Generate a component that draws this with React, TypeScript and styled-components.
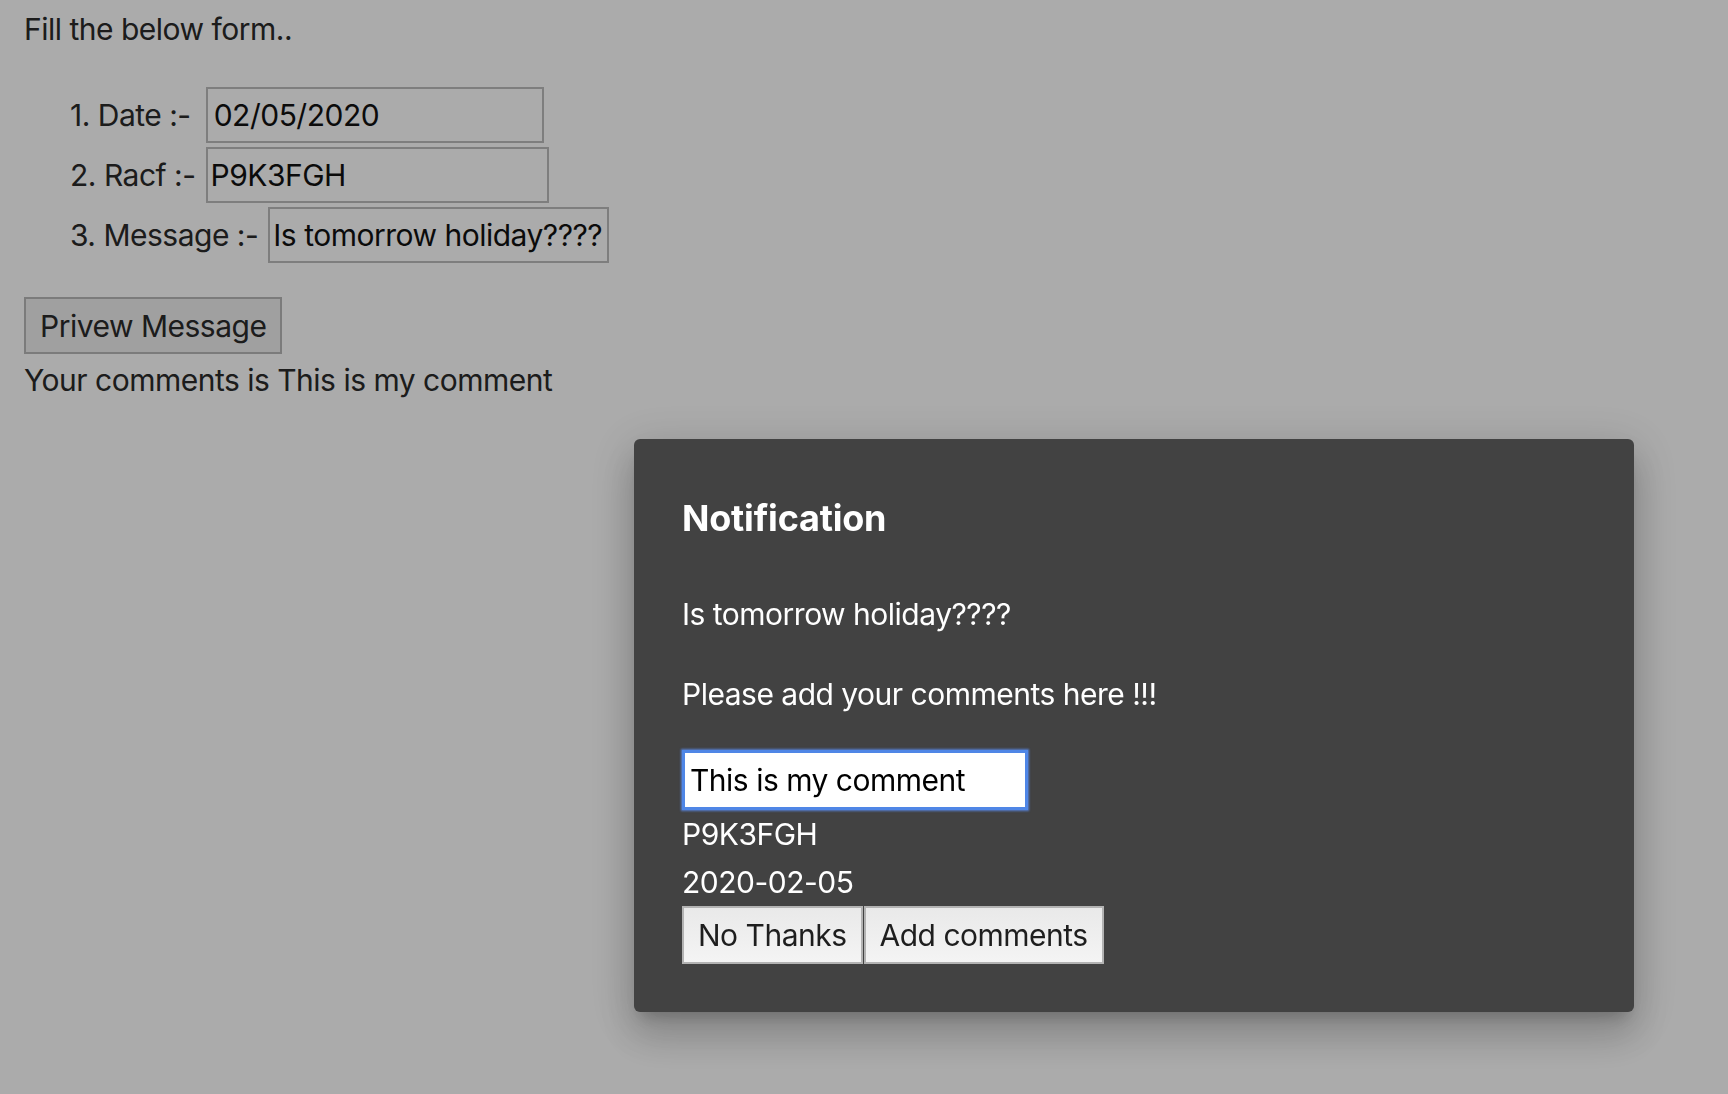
import React from "react";
import styled, { createGlobalStyle } from "styled-components";

const GlobalStyle = createGlobalStyle`
  html, body { margin: 0; padding: 0; background: #ffffff; }
  body { font-family: Inter, "Noto Sans", Arial, sans-serif; color: #2a2a2a; letter-spacing: -0.5px; }
  * { box-sizing: border-box; }
`;

const Page = styled.div`
  padding: 9px 24px 0 24px;
  font-size: 30px;
  line-height: 40px;
`;

const Title = styled.div`
  margin: 0 0 38px 0;
`;

const List = styled.ol`
  list-style: none;
  margin: 0 0 34px 0;
  padding: 0 0 0 46px;
  display: flex;
  flex-direction: column;
  gap: 4px;
`;

const Row = styled.li<{ $gap: number }>`
  display: flex;
  align-items: center;
  gap: ${(p) => p.$gap}px;
`;

const Label = styled.span`
  white-space: nowrap;
`;

const Field = styled.input<{ $w: number; $pad: number }>`
  width: ${(p) => p.$w}px;
  height: 56px;
  padding: 0 ${(p) => p.$pad}px;
  font: inherit;
  letter-spacing: inherit;
  color: #111;
  background: #ffffff;
  border: 2px solid #bdbdbd;
  outline: none;
`;

const PreviewButton = styled.button`
  display: block;
  height: 57px;
  padding: 0 14px;
  font: inherit;
  letter-spacing: inherit;
  color: #2a2a2a;
  background: #efefef;
  border: 2px solid #b8b8b8;
`;

const Result = styled.div`
  margin-top: 6px;
`;

const Backdrop = styled.div`
  position: fixed;
  inset: 0;
  background: rgba(0, 0, 0, 0.33);
  display: flex;
  align-items: flex-start;
  padding: 439px 0 0 634px;
`;

const Dialog = styled.div`
  width: 1000px;
  padding: 48px;
  background: #424242;
  color: #ffffff;
  border-radius: 6px;
  box-shadow: 0px 11px 15px -7px rgba(0, 0, 0, 0.2),
    0px 24px 38px 3px rgba(0, 0, 0, 0.14),
    0px 9px 46px 8px rgba(0, 0, 0, 0.12);
  font-size: 30px;
  display: flex;
  flex-direction: column;
  align-items: flex-start;
`;

const DialogTitle = styled.h2`
  margin: 0 0 45px 0;
  font-size: 36px;
  line-height: 62px;
  font-weight: 700;
  letter-spacing: -0.2px;
`;

const Text = styled.p<{ $gap: number }>`
  margin: 0 0 ${(p) => p.$gap}px 0;
  line-height: 40px;
`;

const CommentInput = styled.input`
  width: 346px;
  height: 60px;
  padding: 0 5px;
  font: inherit;
  letter-spacing: inherit;
  color: #000;
  background: #fff;
  border: 3px solid #4f86e6;
  box-shadow: 0 0 2px 1px rgba(90, 140, 240, 0.8);
  outline: none;
`;

const InfoLine = styled.div`
  line-height: 48px;
`;

const Actions = styled.div`
  display: flex;
`;

const ActionButton = styled.button`
  height: 58px;
  padding: 0 14px;
  font: inherit;
  letter-spacing: inherit;
  color: #1e1e1e;
  background: linear-gradient(#e9e9e9, #f4f4f4);
  border: 2px solid #b3b3b3;
  & + & { margin-left: 1px; }
`;

export default function App() {
  return (
    <>
      <GlobalStyle />
      <Page>
        <Title>Fill the below form..</Title>
        <List>
          <Row $gap={15}>
            <Label>1. Date :-</Label>
            <Field $w={338} $pad={6} defaultValue="02/05/2020" />
          </Row>
          <Row $gap={10}>
            <Label>2. Racf :-</Label>
            <Field $w={343} $pad={3} defaultValue="P9K3FGH" />
          </Row>
          <Row $gap={10}>
            <Label>3. Message :-</Label>
            <Field $w={341} $pad={3} defaultValue="Is tomorrow holiday????" />
          </Row>
        </List>
        <PreviewButton>Privew Message</PreviewButton>
        <Result>Your comments is This is my comment</Result>
      </Page>
      <Backdrop>
        <Dialog>
          <DialogTitle>Notification</DialogTitle>
          <Text $gap={40}>Is tomorrow holiday????</Text>
          <Text $gap={36}>Please add your comments here !!!</Text>
          <CommentInput defaultValue="This is my comment" />
          <InfoLine>P9K3FGH</InfoLine>
          <InfoLine>2020-02-05</InfoLine>
          <Actions>
            <ActionButton>No Thanks</ActionButton>
            <ActionButton>Add comments</ActionButton>
          </Actions>
        </Dialog>
      </Backdrop>
    </>
  );
}
